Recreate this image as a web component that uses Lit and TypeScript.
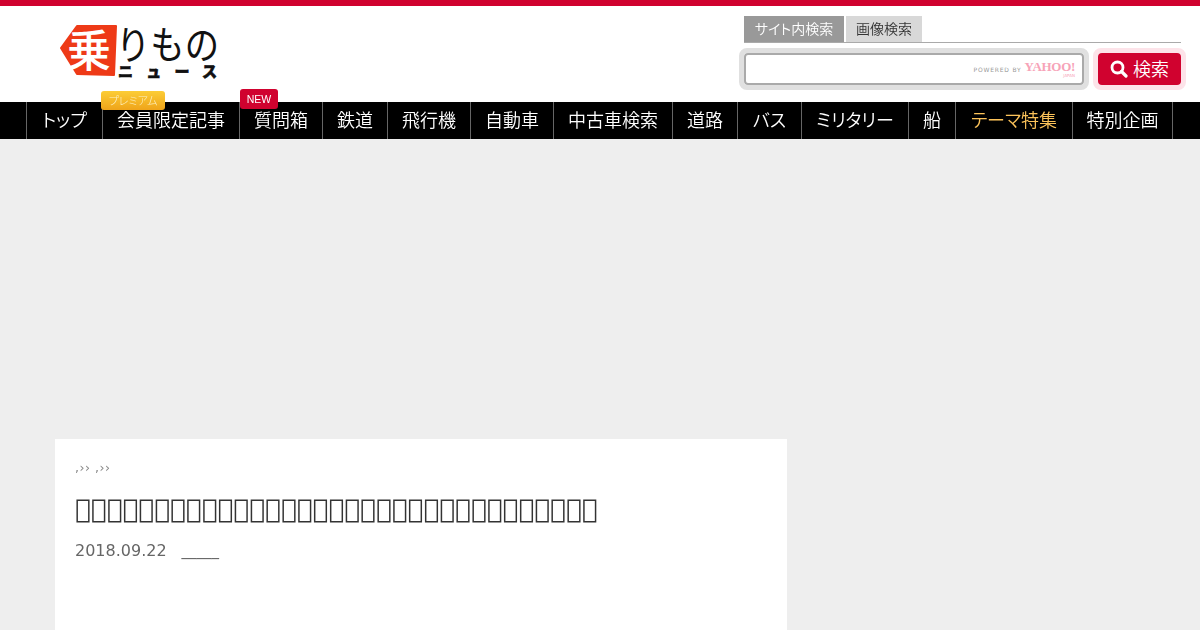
import { LitElement, html, css } from "lit";
import { customElement } from "lit/decorators.js";

const NAV = ["トップ","会員限定記事","質問箱","鉄道","飛行機","自動車","中古車検索","道路","バス","ミリタリー","船","テーマ特集","特別企画"];

@customElement("app-root")
export class AppRoot extends LitElement {
  static styles = css`
    :host { display: block; width: 1200px; height: 630px; overflow: hidden; background: #eee;
      font-family: "Noto Sans CJK JP", "DejaVu Sans", sans-serif; }
    .top { height: 96px; border-top: 6px solid #d0022f; background: #fff; display: flex; justify-content: space-between; padding: 0 14px 0 55px; }
    .logo { display: block; margin-top: 14px; overflow: visible; }
    .search { width: 447px; padding-top: 10px; display: flex; flex-direction: column; align-items: flex-end; }
    .tabs { display: flex; gap: 2px; width: 437px; height: 27px; margin-right: 5px; border-bottom: 1px solid #aaa; box-sizing: border-box; }
    .tab { height: 26px; font-size: 14px; font-weight: 350; line-height: 25px; text-align: center; background: #d8d8d8; color: #333; width: 76px; font-feature-settings: "palt"; will-change: transform; }
    .tab.on { background: #999; color: #fff; width: 100px; }
    .row { display: flex; gap: 4px; margin-top: 5px; width: 447px; }
    .wrap { width: 340px; height: 32px; border: 5px solid #e0e0e0; border-radius: 8px; display: flex; }
    .field { flex: 1; border: 2px solid #aaa; border-radius: 4px; background: #fff; display: flex; align-items: center; justify-content: flex-end; gap: 3px; padding-right: 7px; }
    .pow { font: 6px "DejaVu Sans", sans-serif; color: #999; letter-spacing: 0.8px; }
    .yj { display: flex; flex-direction: column; align-items: flex-end; color: #f7a3b8; line-height: 1; }
    .yj b { font: 700 13px/12px "Liberation Serif", serif; letter-spacing: -0.3px; }
    .yj i { font: normal 4px/5px "DejaVu Sans", sans-serif; }
    .btnwrap { border: 5px solid #fde3e9; border-radius: 8px; }
    .btn { width: 83px; height: 32px; background: #d0022f; border-radius: 4px; color: #fff; font-size: 18px; font-weight: 350; display: flex; align-items: center; justify-content: center; gap: 5px; }
    .btn span { margin-bottom: 2px; }
    nav { height: 37px; background: #000; padding-left: 26px; display: grid;
      grid-template-columns: 76px 137px 83px 65px 83px 83px 119px 65px 64px 107px 47px 117px 101px; }
    .item { border-left: 1px solid #666; color: #fff; font-size: 18px; font-weight: 350; line-height: 35px; text-align: center; font-feature-settings: "palt"; white-space: nowrap; position: relative; will-change: transform; }
    .item:last-child { border-right: 1px solid #666; }
    .item.theme { color: #fcc35a; }
    .badge { position: absolute; height: 19px; border-radius: 3px; font-size: 11px; font-weight: 300; line-height: 19px; text-align: center; color: #fff; }
    .prem { left: -2px; top: -11px; width: 64px; background: linear-gradient(#fccd36, #efa41a); color: #fdf0c0; font-feature-settings: "palt"; }
    .new { left: 0px; top: -13px; width: 38px; height: 20px; line-height: 20px; background: #d0022f; font: 10.5px/20px "Liberation Sans", sans-serif; }
    .ad { height: 300px; }
    .card { margin-left: 55px; width: 692px; height: 191px; background: #fff; padding: 20px; font-family: "DejaVu Sans", sans-serif; }
    .crumb, h1, .meta { will-change: transform; }
    .crumb { font-size: 12.5px; line-height: 18px; color: #888; letter-spacing: 0.5px; }
    h1 { margin: 12px 0 0; font-size: 26.4px; font-weight: 400; line-height: 40px; color: #333; white-space: nowrap; }
    .meta { margin-top: 10px; font-size: 16px; line-height: 24px; color: #666; display: flex; gap: 15px; }
    .meta .u { font-size: 15px; line-height: 22px; }
  `;

  render() {
    return html`
      <div class="top">
        <svg class="logo" width="170" height="62" viewBox="55 20 170 62">
          <polygon points="77,26 116,26 114,75 77,74 61,48" fill="#ee3a17" stroke="#ee3a17" stroke-width="2" stroke-linejoin="round"></polygon>
          <text x="89" y="67" text-anchor="middle" font-size="44" font-weight="500" fill="#fff" font-family="Noto Sans CJK JP">乗</text>
          <text x="116" y="59" font-size="39" fill="#111" font-family="Noto Sans CJK JP" textLength="103" lengthAdjust="spacingAndGlyphs">りもの</text>
          <text x="118" y="77" font-size="15" font-weight="900" fill="#111" stroke="#111" stroke-width="0.6" font-family="Noto Sans CJK JP" textLength="99">ニュース</text>
        </svg>
        <div class="search">
          <div class="tabs"><div class="tab on">サイト内検索</div><div class="tab">画像検索</div></div>
          <div class="row">
            <div class="wrap"><div class="field">
              <span class="pow">POWERED BY</span>
              <span class="yj"><b>YAHOO!</b><i>JAPAN</i></span>
            </div></div>
            <div class="btnwrap"><div class="btn">
              <svg width="18" height="18" viewBox="0 0 18 18" fill="none" stroke="#fff"><circle cx="7.5" cy="7.5" r="5.5" stroke-width="2.8"></circle><path d="M11.5 11.5 16 16" stroke-width="3.2" stroke-linecap="round"></path></svg>
              <span>検索</span>
            </div></div>
          </div>
        </div>
      </div>
      <nav>
        ${NAV.map((t, i) => html`<div class="item ${i === 11 ? "theme" : ""}">${t}${i === 1 ? html`<span class="badge prem">プレミアム</span>` : ""}${i === 2 ? html`<span class="badge new">NEW</span>` : ""}</div>`)}
      </nav>
      <div class="ad"></div>
      <div class="card">
        <div class="crumb">,›› ,››</div>
        <h1>${"\uE000".repeat(33)}</h1>
        <div class="meta"><span>2018.09.22</span><span class="u">_____</span></div>
      </div>
    `;
  }
}
